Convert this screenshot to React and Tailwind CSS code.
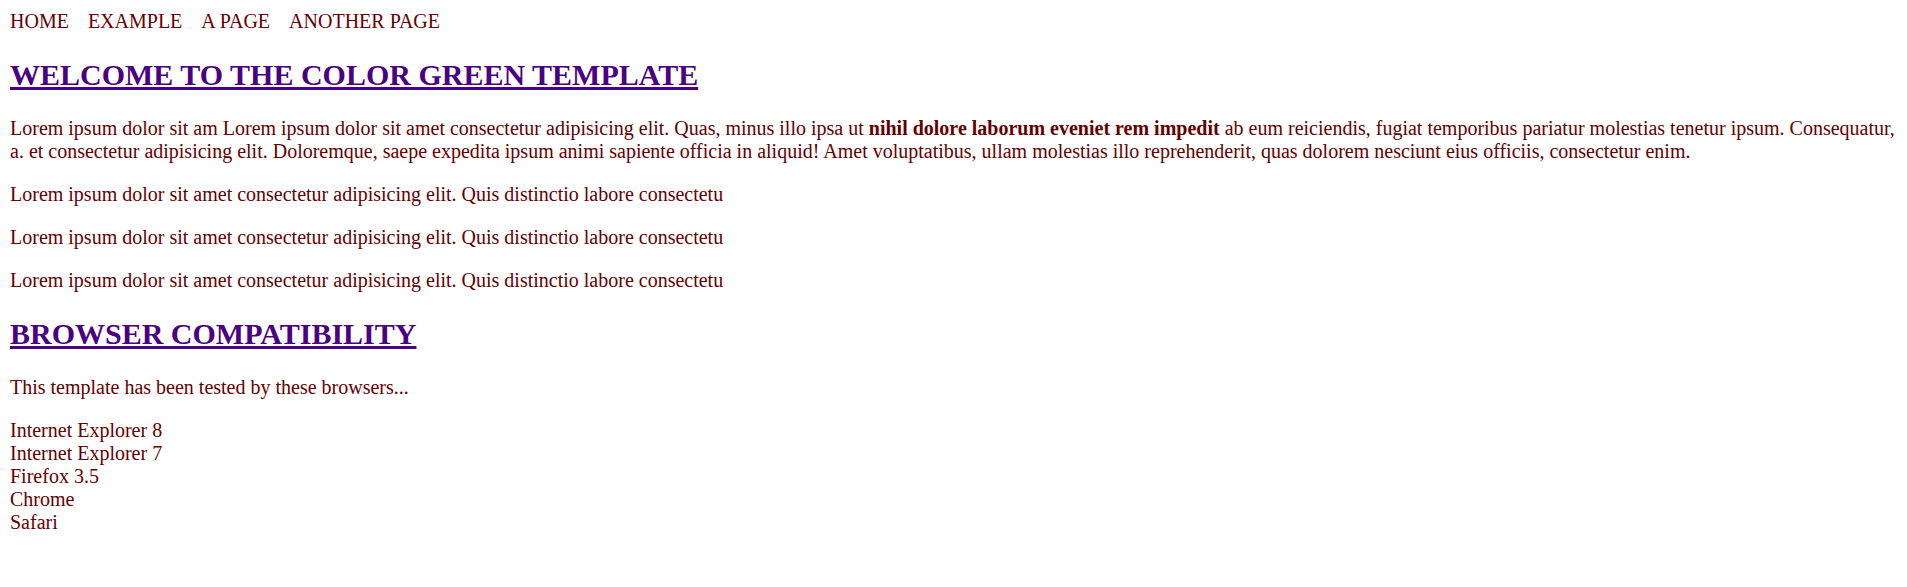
const navLinks = ["HOME", "EXAMPLE", "A PAGE", "ANOTHER PAGE"]

const browsers = ["Internet Explorer 8", "Internet Explorer 7", "Firefox 3.5", "Chrome", "Safari"]

const shortText = "Lorem ipsum dolor sit amet consectetur adipisicing elit. Quis distinctio labore consectetu"

export default function App() {
  return (
    <div
      className="m-[10px] text-[20px] leading-[normal] text-[#660000] bg-white"
      style={{ fontFamily: '"Liberation Serif", "Times New Roman", serif' }}
    >
      {/* top nav */}
      <nav className="flex gap-[19px]">
        {navLinks.map((link) => (
          <a key={link} href="#" className="text-[#660000]">
            {link}
          </a>
        ))}
      </nav>

      <h2 className="mt-[25px] mb-[25px] text-[30px] font-bold">
        <a href="#" className="text-[#4b0082] underline">WELCOME TO THE COLOR GREEN TEMPLATE</a>
      </h2>

      <p className="my-[20px]">
        Lorem ipsum dolor sit am Lorem ipsum dolor sit amet consectetur adipisicing elit. Quas, minus illo ipsa ut{" "}
        <strong className="font-bold">nihil dolore laborum eveniet rem impedit</strong> ab eum reiciendis, fugiat
        temporibus pariatur molestias tenetur ipsum. Consequatur,
        <br />
        a. et consectetur adipisicing elit. Doloremque, saepe expedita ipsum animi sapiente officia in aliquid! Amet
        voluptatibus, ullam molestias illo reprehenderit, quas dolorem nesciunt eius officiis, consectetur enim.
      </p>
      <p className="my-[20px]">{shortText}</p>
      <p className="my-[20px]">{shortText}</p>
      <p className="my-[20px]">{shortText}</p>

      <h2 className="mt-[25px] mb-[25px] text-[30px] font-bold">
        <a href="#" className="text-[#4b0082] underline">BROWSER COMPATIBILITY</a>
      </h2>

      <p className="my-[20px]">This template has been tested by these browsers...</p>

      <p className="my-[20px]">
        {browsers.map((b, i) => (
          <span key={b}>
            {b}
            {i < browsers.length - 1 && <br />}
          </span>
        ))}
      </p>
    </div>
  )
}
